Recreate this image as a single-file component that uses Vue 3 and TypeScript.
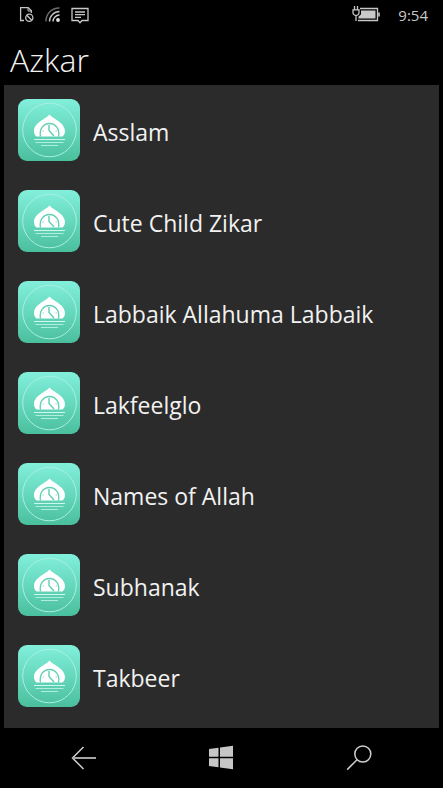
<script setup lang="ts">
interface Zikr {
  id: number
  name: string
}

const items: Zikr[] = [
  'Asslam',
  'Cute Child Zikar',
  'Labbaik Allahuma Labbaik',
  'Lakfeelglo',
  'Names of Allah',
  'Subhanak',
  'Takbeer',
].map((name, id) => ({ id, name }))
</script>

<template>
  <div class="phone">
    <header class="status">
      <div class="status-icons">
        <svg width="16" height="18" viewBox="0 0 16 18" fill="none" stroke="#c4c4c4" stroke-width="1.3" aria-hidden="true">
          <path d="M5 14.5H1.6V1.6H9.2L12.4 4.8V7" />
          <path d="M9 1.6V5H12.4" stroke-width="1" />
          <circle cx="10.3" cy="11.7" r="3.6" />
          <path d="M7.8 9.2L12.8 14.2" />
        </svg>
        <svg width="18" height="18" viewBox="0 0 18 18" fill="none" stroke-width="1.4" aria-hidden="true">
          <path d="M2 15.5A13 13 0 0 1 15.5 2" stroke="#6c6c6c" />
          <path d="M5.5 15.5A10 10 0 0 1 15.5 5.5" stroke="#c4c4c4" />
          <path d="M9 15.5A6.5 6.5 0 0 1 15.5 9" stroke="#d0d0d0" />
          <circle cx="14" cy="14" r="1.9" fill="#e4e4e4" />
        </svg>
        <svg width="18" height="18" viewBox="0 0 18 18" fill="none" stroke="#c8c8c8" stroke-width="1.3" aria-hidden="true">
          <path d="M1 2.5H17V14.5H11L9 16.7L7 14.5H1Z" />
          <path d="M4 6H14M4 8.600H14M4 11.300H10" />
        </svg>
      </div>
      <div class="status-right">
        <svg width="30" height="18" viewBox="0 0 30 18" fill="none" stroke="#c8c8c8" stroke-width="1.3" aria-hidden="true">
          <path d="M2.5 0V4M5.5 0V4M1 3.800H7V6.500A3 3 0 0 1 1 6.500ZM4 9.500V15" />
          <path d="M8 2.500H25.500V14.500H6" />
          <path d="M9 4.500H23.500V12.500H6.500V10.500L9 8.500Z" fill="#c8c8c8" stroke="none" />
          <path d="M27 6.500V10.500" stroke-width="1.6" />
        </svg>
        <time class="clock">9:54</time>
      </div>
    </header>

    <h1 class="title">Azkar</h1>

    <main class="panel">
      <ul class="list">
        <li v-for="item in items" :key="item.id">
          <button class="row" type="button">
            <svg class="tile" viewBox="0 0 62 62" aria-hidden="true">
              <defs>
                <linearGradient :id="`mint-${item.id}`" x1="0" y1="0" x2="0" y2="1">
                  <stop offset="0" stop-color="#82efdb" />
                  <stop offset="0.5" stop-color="#66d8bd" />
                  <stop offset="1" stop-color="#4abf9d" />
                </linearGradient>
              </defs>
              <rect width="62" height="62" rx="9" :fill="`url(#mint-${item.id})`" />
              <circle cx="31.5" cy="31" r="26.8" fill="none" stroke="#a9f0e0" stroke-width="1" />
              <path d="M31.5 15.5C35 20 47 23.500 47 32C47 34.500 46 36.500 44.500 37.500H18.500C17 36.500 16 34.500 16 32C16 23.500 28 20 31.500 15.500Z" fill="#fff" />
              <path d="M22.500 37.500C21 30 25.500 24.500 31.500 24.500C37.500 24.500 42 30 40.500 37.500" fill="none" stroke="#5fcfb3" stroke-width="1.3" />
              <path d="M31 26V31.500L36 37" fill="none" stroke="#5fcfb3" stroke-width="1.4" />
              <path d="M24.500 32H26M37.500 32H39" stroke="#8fdfca" stroke-width="1" />
              <path d="M16 40.500H47" stroke="#d0f7ee" stroke-width="1" />
              <path d="M17.500 43.500H45.500M23 46.500H40" stroke="#b0eddc" stroke-width="1" />
            </svg>
            <span class="name">{{ item.name }}</span>
          </button>
        </li>
      </ul>
    </main>

    <nav class="nav" aria-label="System">
      <button type="button" aria-label="Back">
        <svg width="26" height="26" viewBox="0 0 26 26" fill="none" stroke="#cfcfcf" stroke-width="1.5" aria-hidden="true">
          <path d="M12.5 2L1.5 13L12.5 24" />
          <path d="M1.5 13H25" stroke="#a5a5a5" stroke-width="2" />
        </svg>
      </button>
      <button type="button" aria-label="Start">
        <svg width="26" height="26" viewBox="0 0 26 26" fill="#c6c6c6" aria-hidden="true">
          <path d="M1 4L10.5 2.700V11.800H1ZM12 2.500L25 0.700V11.800H12ZM1 13.300H10.500V22.300L1 21ZM12 13.300H25V24.300L12 22.500Z" />
        </svg>
      </button>
      <button type="button" aria-label="Search">
        <svg width="26" height="26" viewBox="0 0 26 26" fill="none" stroke="#cfcfcf" stroke-width="1.5" aria-hidden="true">
          <circle cx="16.8" cy="9" r="8" />
          <path d="M11 14.8L1.2 24.6" />
        </svg>
      </button>
    </nav>
  </div>
</template>

<style>
body {
  margin: 0;
  background: #000;
}
</style>

<style scoped>
.phone {
  display: flex;
  flex-direction: column;
  min-height: 100vh;
  background: #000;
  color: #f2f2f2;
  font-family: "Open Sans", "Noto Sans", sans-serif;
}

.status {
  display: flex;
  align-items: center;
  justify-content: space-between;
  height: 30px;
  padding: 0 15px 0 19px;
}

.status-icons,
.status-right {
  display: flex;
  align-items: center;
  gap: 9px;
}

.status-right {
  gap: 16px;
}

.status svg {
  display: block;
}

.clock {
  color: #c8c8c8;
  font-size: 15px;
  line-height: 20px;
}

.title {
  margin: 0;
  padding: 8px 10px 3px;
  font-size: 32px;
  font-weight: 300;
  line-height: 44px;
}

.panel {
  flex: 1;
  margin: 0 4px;
  padding: 14px 14px 21px;
  background: #2b2b2b;
}

.list {
  display: flex;
  flex-direction: column;
  gap: 29px;
  margin: 0;
  padding: 0;
  list-style: none;
}

.row {
  display: flex;
  align-items: center;
  gap: 13px;
  width: 100%;
  padding: 0;
  border: 0;
  background: none;
  color: inherit;
  font: inherit;
  text-align: left;
}

.tile {
  flex: none;
  width: 62px;
  height: 62px;
}

.name {
  padding-top: 4px;
  font-size: 23px;
  line-height: 32px;
}

.nav {
  display: flex;
  justify-content: space-around;
  height: 60px;
  padding: 0 15px;
}

.nav button {
  display: flex;
  align-items: center;
  justify-content: center;
  width: 60px;
  padding: 0;
  border: 0;
  background: none;
}
</style>
